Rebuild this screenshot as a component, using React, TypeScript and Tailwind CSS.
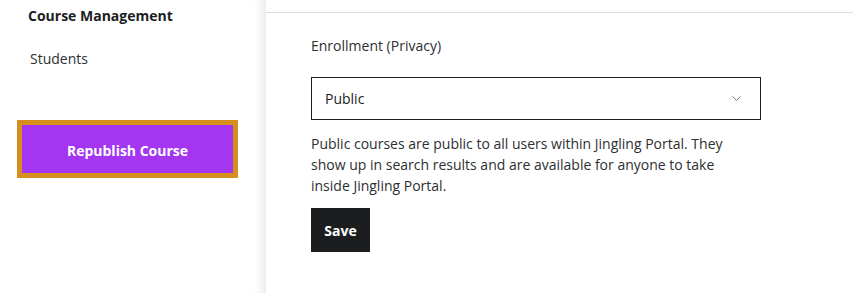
import React, { useState } from 'react';
import { ChevronDown } from 'lucide-react';

export default function App() {
  const [privacy, setPrivacy] = useState('Public');

  return (
    <div className="flex h-[293px] w-full overflow-hidden bg-white font-['Open_Sans',sans-serif] text-[#1c1d1f]">
      {/* Sidebar */}
      <aside className="flex w-[266px] shrink-0 flex-col bg-white shadow-[inset_-10px_0_10px_-6px_rgba(0,0,0,0.09)]">
        <div className="pl-[28px] pt-[6px] text-[14px] font-bold leading-[20px]">Course Management</div>
        <div className="pl-[30px] pt-[23px] text-[14px] leading-[20px] text-[#2d2f31]">Students</div>
        <button className="ml-[17px] mt-[51px] h-[58px] w-[221px] border-[5px] border-[#d68f1f] bg-[#a435f0] pt-[2px] text-[14px] font-bold text-white">
          Republish Course
        </button>
      </aside>

      {/* Main */}
      <main className="flex flex-1 flex-col">
        <div className="h-[13px] border-b border-[#dcdcdc]" />
        <div className="flex flex-col pl-[45px] pt-[23px]">
          <label className="text-[14px] leading-[20px] text-[#2d2f31]">Enrollment (Privacy)</label>
          <div className="mt-[21px] flex h-[43px] w-[450px] items-center justify-between border border-[#1c1d1f] pl-[13px] pr-[16px]">
            <span className="text-[14px]">{privacy}</span>
            <ChevronDown className="h-[15px] w-[15px] text-[#6a6f73]" strokeWidth={1.5} onClick={() => setPrivacy('Public')} />
          </div>
          <p className="mt-[13px] w-[430px] text-[14px] leading-[21px] text-[#2d2f31]">
            Public courses are public to all users within Jingling Portal. They show up in search results and are available for anyone to take inside Jingling Portal.
          </p>
          <button className="mt-[12px] h-[44px] w-[59px] bg-[#1c1d1f] text-[14px] font-bold text-white">Save</button>
        </div>
      </main>
    </div>
  );
}
